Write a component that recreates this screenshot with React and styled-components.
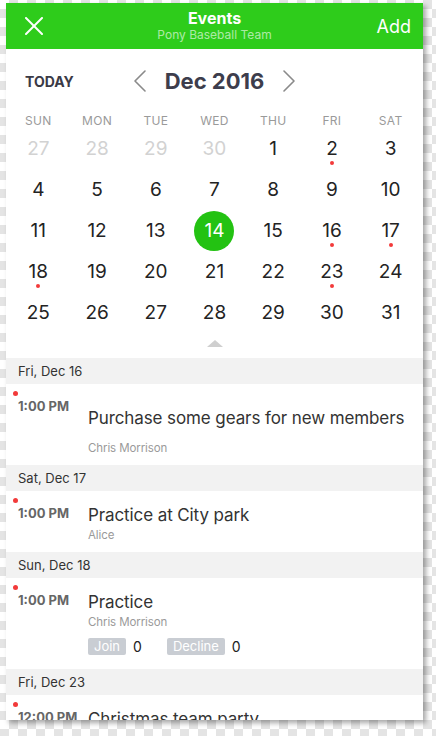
import React from 'react';
import styled, { createGlobalStyle } from 'styled-components';

const GlobalStyle = createGlobalStyle`
  html, body {
    margin: 0;
    padding: 0;
  }
  body {
    font-family: Inter, "Noto Sans", "Liberation Sans", sans-serif;
    -webkit-font-smoothing: antialiased;
  }
`;

const Page = styled.div`
  min-height: 100vh;
  box-sizing: border-box;
  padding: 3px 0 0 6px;
  background-color: #ffffff;
  background-image: repeating-conic-gradient(#e4e4e4 0% 25%, #ffffff 0% 50%);
  background-size: 18px 18px;
`;

const Phone = styled.div`
  width: 417px;
  height: 717px;
  background: #fff;
  overflow: hidden;
  box-shadow: 3px 3px 5px rgba(0, 0, 0, 0.35);
`;

const Header = styled.header`
  height: 46px;
  background: #2ecc1b;
  display: grid;
  grid-template-columns: 1fr auto 1fr;
  align-items: center;
  color: #fff;
`;

const CloseButton = styled.button`
  justify-self: start;
  background: none;
  border: none;
  padding: 0 0 0 19px;
  display: flex;
  color: #fff;
  cursor: pointer;
`;

const TitleBlock = styled.div`
  display: flex;
  flex-direction: column;
  align-items: center;
`;

const Title = styled.div`
  font-size: 16px;
  font-weight: 700;
  line-height: 20px;
  margin-top: -3px;
`;

const Subtitle = styled.div`
  font-size: 12px;
  line-height: 14px;
  color: rgba(255, 255, 255, 0.62);
`;

const AddButton = styled.button`
  justify-self: end;
  background: none;
  border: none;
  padding: 0 12px 0 0;
  font-family: inherit;
  font-size: 18px;
  color: #fff;
  cursor: pointer;
`;

const MonthBar = styled.div`
  height: 64px;
  display: grid;
  grid-template-columns: 1fr auto 1fr;
  align-items: center;
`;

const TodayButton = styled.button`
  justify-self: start;
  background: none;
  border: none;
  padding: 0 0 0 19px;
  font-family: inherit;
  font-size: 14px;
  font-weight: 700;
  color: #3a3a46;
  cursor: pointer;
`;

const MonthNav = styled.div`
  display: flex;
  align-items: center;
  gap: 19px;
`;

const Chevron = styled.button`
  background: none;
  border: none;
  padding: 0;
  display: flex;
  color: #8a8a8a;
  cursor: pointer;
`;

const MonthLabel = styled.div`
  font-size: 22px;
  font-weight: 700;
  color: #3d3d4c;
`;

const Grid = styled.div`
  display: grid;
  grid-template-columns: repeat(7, 1fr);
  padding: 0 3px;
`;

const WeekDay = styled.div`
  height: 15px;
  line-height: 15px;
  text-align: center;
  font-size: 12px;
  color: #9a9a9a;
  letter-spacing: 0.3px;
`;

const DayCell = styled.div`
  height: 41px;
  position: relative;
  display: flex;
  align-items: center;
  justify-content: center;
`;

const DayNumber = styled.div`
  width: 40px;
  height: 40px;
  border-radius: 50%;
  display: flex;
  align-items: center;
  justify-content: center;
  font-size: 19px;
  color: ${p => (p.$selected ? '#fff' : p.$muted ? '#d2d2d2' : '#232323')};
  background: ${p => (p.$selected ? '#23c212' : 'transparent')};
`;

const DayDot = styled.span`
  position: absolute;
  left: 50%;
  top: 50%;
  width: 4px;
  height: 4px;
  margin: 12px 0 0 -2px;
  border-radius: 50%;
  background: #f23a3a;
`;

const CaretRow = styled.div`
  display: flex;
  justify-content: center;
  padding: 7px 0 11px;
`;

const Caret = styled.div`
  width: 0;
  height: 0;
  border-left: 8px solid transparent;
  border-right: 8px solid transparent;
  border-bottom: 7px solid #cfcfcf;
`;

const SectionHeader = styled.div`
  height: 26px;
  line-height: 26px;
  background: #f2f2f2;
  padding-left: 12px;
  font-size: 13px;
  color: #333;
`;

const EventRow = styled.div`
  position: relative;
  display: grid;
  grid-template-columns: 82px 1fr;
  padding: 12px 0 ${p => p.$bottom}px;
`;

const EventDot = styled.span`
  position: absolute;
  left: 7px;
  top: 7px;
  width: 5px;
  height: 5px;
  border-radius: 50%;
  background: #f23a3a;
`;

const EventTime = styled.div`
  padding-left: 12px;
  font-size: 13px;
  font-weight: 700;
  line-height: 20px;
  color: #666;
  white-space: nowrap;
`;

const EventBody = styled.div`
  display: flex;
  flex-direction: column;
  min-width: 0;
`;

const EventTitle = styled.div`
  font-size: 17px;
  letter-spacing: -0.1px;
  line-height: 24px;
  color: #333;
  margin: ${p => (p.$spaced ? '10px 0 10px' : '0')};
  white-space: nowrap;
`;

const EventOwner = styled.div`
  font-size: 11.5px;
  letter-spacing: -0.1px;
  line-height: 16px;
  color: #9a9a9a;
`;

const Rsvp = styled.div`
  display: flex;
  align-items: center;
  margin-top: 8px;
`;

const RsvpButton = styled.button`
  height: 17px;
  padding: 0 6px;
  border: none;
  border-radius: 2px;
  background: #c9cdd3;
  color: #fff;
  font-family: inherit;
  font-size: 13px;
  line-height: 17px;
  cursor: pointer;
`;

const RsvpCount = styled.span`
  font-size: 14px;
  color: #222;
  margin: 0 25px 0 7px;
`;

const CloseIcon = () => (
  <svg width="18" height="18" viewBox="0 0 18 18" fill="none" stroke="currentColor" strokeWidth="2" strokeLinecap="round">
    <line x1="1" y1="1" x2="17" y2="17" />
    <line x1="17" y1="1" x2="1" y2="17" />
  </svg>
);

const ChevronIcon = ({ dir }) => (
  <svg width="12" height="22" viewBox="0 0 12 22" fill="none" stroke="currentColor" strokeWidth="1.6" strokeLinecap="round" strokeLinejoin="round">
    {dir === 'left' ? <polyline points="11,1 1,11 11,21" /> : <polyline points="1,1 11,11 1,21" />}
  </svg>
);

const weekDays = ['SUN', 'MON', 'TUE', 'WED', 'THU', 'FRI', 'SAT'];
const eventDays = [2, 16, 17, 18, 23];
const days = [
  ...[27, 28, 29, 30].map(d => ({ d, muted: true })),
  ...Array.from({ length: 31 }, (_, i) => ({ d: i + 1 })),
];

const events = [
  { date: 'Fri, Dec 16', time: '1:00 PM', title: 'Purchase some gears for new members', owner: 'Chris Morrison', spaced: true, bottom: 9 },
  { date: 'Sat, Dec 17', time: '1:00 PM', title: 'Practice at City park', owner: 'Alice', bottom: 9 },
  { date: 'Sun, Dec 18', time: '1:00 PM', title: 'Practice', owner: 'Chris Morrison', rsvp: true, bottom: 14 },
  { date: 'Fri, Dec 23', time: '12:00 PM', title: 'Christmas team party', owner: 'Chris Morrison', bottom: 9 },
];

export default function App() {
  return (
    <Page>
      <GlobalStyle />
      <Phone>
        <Header>
          <CloseButton aria-label="Close"><CloseIcon /></CloseButton>
          <TitleBlock>
            <Title>Events</Title>
            <Subtitle>Pony Baseball Team</Subtitle>
          </TitleBlock>
          <AddButton>Add</AddButton>
        </Header>

        <MonthBar>
          <TodayButton>TODAY</TodayButton>
          <MonthNav>
            <Chevron aria-label="Previous month"><ChevronIcon dir="left" /></Chevron>
            <MonthLabel>Dec 2016</MonthLabel>
            <Chevron aria-label="Next month"><ChevronIcon dir="right" /></Chevron>
          </MonthNav>
          <div />
        </MonthBar>

        <Grid>
          {weekDays.map(w => <WeekDay key={w}>{w}</WeekDay>)}
          {days.map(({ d, muted }) => (
            <DayCell key={`${muted ? 'p' : 'c'}${d}`}>
              <DayNumber $muted={muted} $selected={!muted && d === 14}>{d}</DayNumber>
              {!muted && eventDays.includes(d) && <DayDot />}
            </DayCell>
          ))}
        </Grid>
        <CaretRow><Caret /></CaretRow>

        {events.map(ev => (
          <React.Fragment key={ev.date}>
            <SectionHeader>{ev.date}</SectionHeader>
            <EventRow $bottom={ev.bottom}>
              <EventDot />
              <EventTime>{ev.time}</EventTime>
              <EventBody>
                <EventTitle $spaced={ev.spaced}>{ev.title}</EventTitle>
                <EventOwner>{ev.owner}</EventOwner>
                {ev.rsvp && (
                  <Rsvp>
                    <RsvpButton>Join</RsvpButton>
                    <RsvpCount>0</RsvpCount>
                    <RsvpButton>Decline</RsvpButton>
                    <RsvpCount>0</RsvpCount>
                  </Rsvp>
                )}
              </EventBody>
            </EventRow>
          </React.Fragment>
        ))}
      </Phone>
    </Page>
  );
}
